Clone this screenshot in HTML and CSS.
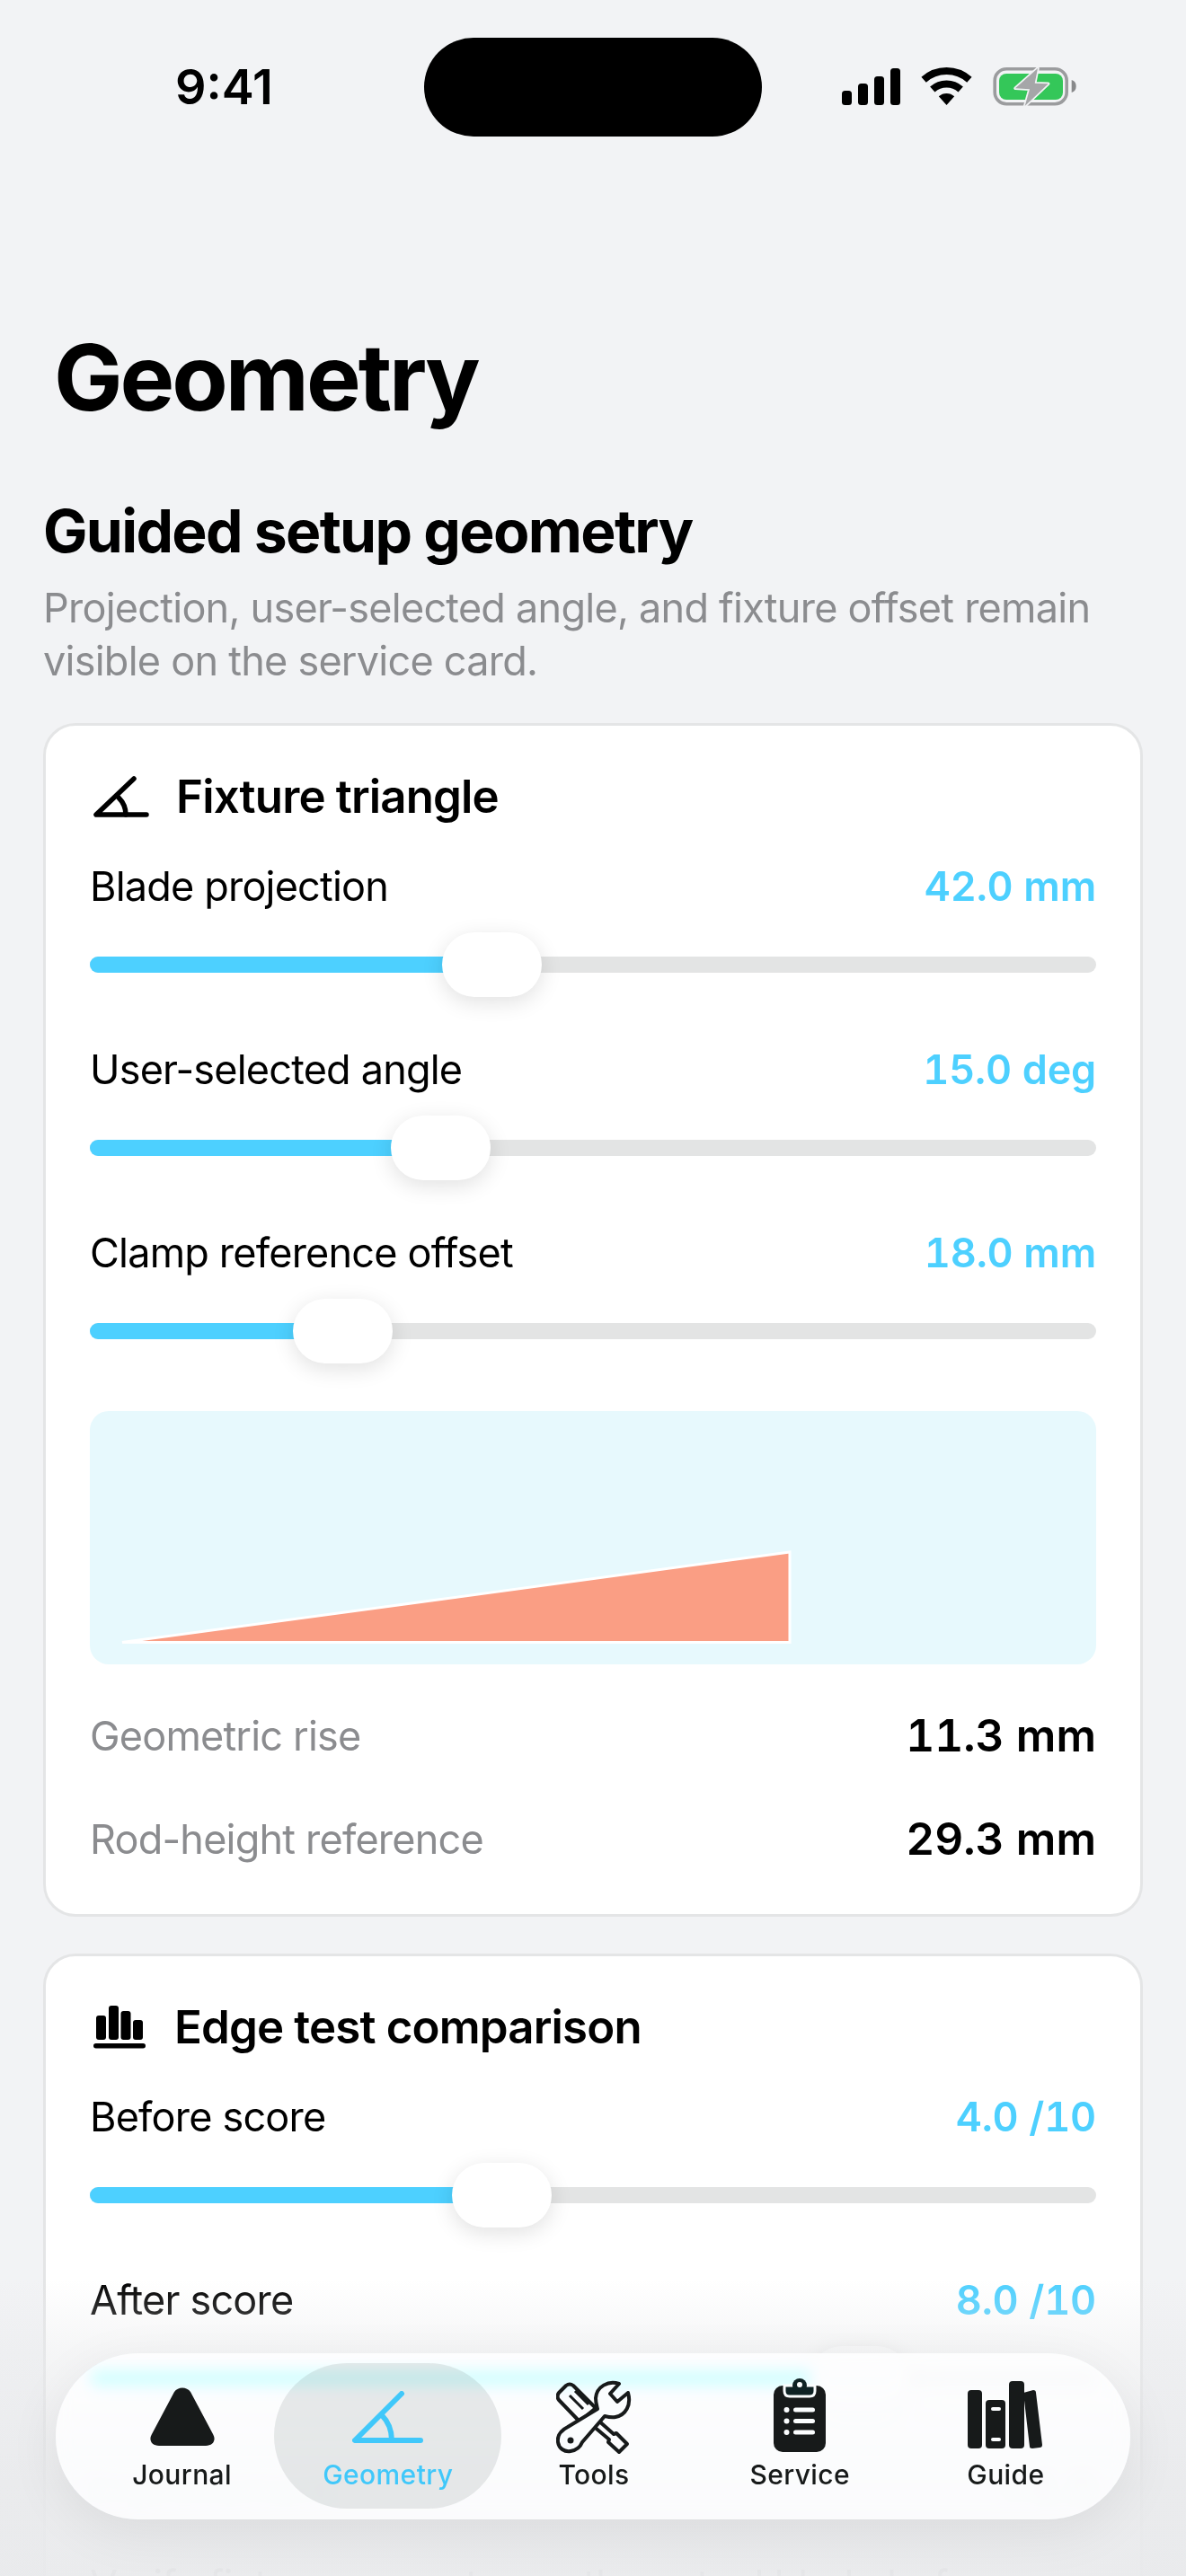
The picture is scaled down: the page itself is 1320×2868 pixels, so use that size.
FILE: index.html
```html
<!DOCTYPE html>
<html lang="en">
<head>
  <meta charset="UTF-8">
  <title>Geometry</title>
  <link rel="stylesheet" href="styles.css">
</head>
<body>
  <div class="phone">
    <header class="status">
      <span class="time">9:41</span>
      <div class="island"></div>
      <div class="status-icons">
        <svg class="signal" width="66" height="41" viewBox="0 0 66 41">
          <rect x="0" y="25" width="11" height="16" rx="3.5"/>
          <rect x="18" y="17" width="11" height="24" rx="3.5"/>
          <rect x="36" y="9" width="11" height="32" rx="3.5"/>
          <rect x="54" y="0" width="11" height="41" rx="3.5"/>
        </svg>
        <svg class="wifi" width="57" height="42" viewBox="0 0 57 42">
          <path d="M3.1 13.8A38 38 0 0 1 53.9 13.8" fill="none" stroke="#000" stroke-width="8"/>
          <path d="M12.8 24.5A23.5 23.5 0 0 1 44.2 24.5" fill="none" stroke="#000" stroke-width="8"/>
          <path d="M28.5 42L19.8 32.3A13 13 0 0 1 37.2 32.3Z"/>
        </svg>
        <svg class="battery" width="93" height="46" viewBox="0 0 93 46">
          <rect x="2.2" y="2.7" width="80" height="39" rx="13" fill="none" stroke="#9b9c9e" stroke-width="3.6"/>
          <rect x="7" y="8" width="71" height="29" rx="8" fill="#34c759"/>
          <path d="M87.7 15C91 16 92.700 18.500 92.700 22S91 28 87.700 29Z" fill="#88898b"/>
          <path d="M50 2L25 24.300L41 25.300L35.700 44L61.700 19.300L46.700 18.700Z" fill="#a5a6a8" stroke="#f2f3f5" stroke-width="3.500" stroke-linejoin="round" paint-order="stroke"/>
        </svg>
      </div>
    </header>

    <main class="content">
      <h1 class="page-title">Geometry</h1>
      <h2 class="section-title">Guided setup geometry</h2>
      <p class="section-sub">Projection, user-selected angle, and fixture offset remain visible on the service card.</p>

      <section class="card">
        <div class="card-head">
          <svg width="62" height="46" viewBox="0 0 62 46" fill="none" stroke="#000" stroke-width="5.500" stroke-linecap="round" stroke-linejoin="round">
            <path d="M45 3L3 43H59"/>
            <path d="M28 24C33 29 36 36 36 43"/>
          </svg>
          <h3>Fixture triangle</h3>
        </div>

        <div class="slider-row">
          <div class="slider-label"><span>Blade projection</span><span class="slider-value">42.0 mm</span></div>
          <div class="slider"><div class="slider-fill" style="width: 40%"></div><div class="slider-thumb" style="left: 35%"></div></div>
        </div>
        <div class="slider-row">
          <div class="slider-label"><span>User-selected angle</span><span class="slider-value">15.0 deg</span></div>
          <div class="slider"><div class="slider-fill" style="width: 35%"></div><div class="slider-thumb" style="left: 29.900%"></div></div>
        </div>
        <div class="slider-row">
          <div class="slider-label"><span>Clamp reference offset</span><span class="slider-value">18.0 mm</span></div>
          <div class="slider"><div class="slider-fill" style="width: 25%"></div><div class="slider-thumb" style="left: 20.200%"></div></div>
        </div>

        <div class="diagram">
          <svg width="1121" height="282" viewBox="0 0 1121 282">
            <path d="M36 257.500L779 157V257.500Z" fill="#fa9e84" stroke="#fff" stroke-width="3"/>
          </svg>
        </div>

        <div class="stats">
          <div class="stat"><span class="stat-label">Geometric rise</span><span class="stat-value">11.3 mm</span></div>
          <div class="stat"><span class="stat-label">Rod-height reference</span><span class="stat-value">29.3 mm</span></div>
        </div>
      </section>

      <section class="card">
        <div class="card-head">
          <svg width="60" height="48" viewBox="0 0 60 48">
            <rect x="3" y="11" width="11" height="27" rx="3"/>
            <rect x="17" y="0" width="11" height="38" rx="3"/>
            <rect x="30.500" y="6" width="11" height="32" rx="3"/>
            <rect x="44" y="16" width="11" height="22" rx="3"/>
            <rect x="0" y="42" width="58" height="5.500" rx="2.750"/>
          </svg>
          <h3>Edge test comparison</h3>
        </div>

        <div class="slider-row">
          <div class="slider-label"><span>Before score</span><span class="slider-value">4.0 /10</span></div>
          <div class="slider"><div class="slider-fill" style="width: 40%"></div><div class="slider-thumb" style="left: 36%"></div></div>
        </div>
        <div class="slider-row">
          <div class="slider-label"><span>After score</span><span class="slider-value">8.0 /10</span></div>
          <div class="slider"><div class="slider-fill" style="width: 76%"></div><div class="slider-thumb" style="left: 71.500%"></div></div>
        </div>

        <div class="stats stats-tight">
          <div class="stat"><span class="stat-label">Improvement</span><span class="stat-value">+4.0</span></div>
        </div>
        <p class="card-note">Verify fixture geometry on the actual blade before logging the result.</p>
      </section>
    </main>

    <div class="bottom-fade"></div>

    <nav class="tabbar">
      <a class="tab">
        <span class="tab-icon icon-journal">
          <svg width="72" height="65" viewBox="0 0 72 65"><path d="M27 5C31 -1 41 -1 45 5L70 52C74 59 70 65 62 65H10C2 65 -2 59 2 52Z" fill="#171a1a"/></svg>
        </span>
        <span class="tab-label">Journal</span>
      </a>
      <a class="tab tab-active">
        <span class="tab-icon icon-geometry">
          <svg width="80" height="60" viewBox="0 0 80 60" fill="none" stroke="#40c8fa" stroke-width="6" stroke-linecap="round" stroke-linejoin="round">
            <path d="M55 3L3 55H76"/>
            <path d="M33 27C40 34 44 44 44 55"/>
          </svg>
        </span>
        <span class="tab-label">Geometry</span>
      </a>
      <a class="tab">
        <span class="tab-icon icon-tools">
          <svg width="84" height="84" viewBox="18 10 84 84" fill="none" stroke="#171a1a" stroke-width="4" stroke-linejoin="round">
            <path d="M21 24L29 16Q33 13 37 16L62 41L44 56L21 32Q18 28 21 24Z"/>
            <path d="M33 27L48 42M39 22L54 37" stroke-width="3"/>
            <path d="M64 54L82 70L85 69L97 81L88 90L76 79L77 76L58 60"/>
            <path d="M88 14C76 10 63 17 62 30C62 35 63 38 64 42L31 62C23 66 19 72 20 79C21 86 27 90 34 89C41 88 45 84 47 79L72 50C76 51 80 52 84 51C95 49 102 38 98 24L86 34L78 25Z" fill="#fbfdfe"/>
            <circle cx="34" cy="77" r="3.500" fill="#171a1a" stroke="none"/>
          </svg>
        </span>
        <span class="tab-label">Tools</span>
      </a>
      <a class="tab">
        <span class="tab-icon icon-service">
          <svg width="58" height="82" viewBox="0 0 58 82">
            <rect x="0" y="8" width="58" height="74" rx="10" fill="#171a1a"/>
            <path d="M12 8H46V14C46 18 44 20 40 20H18C14 20 12 18 12 14Z" fill="#0f2224" stroke="#fbfdfe" stroke-width="3"/>
            <circle cx="29" cy="8" r="8" fill="#0f2224"/>
            <circle cx="29" cy="7" r="3" fill="#fbfdfe"/>
            <g fill="#fbfdfe">
              <circle cx="14.500" cy="35" r="3"/>
              <circle cx="14.500" cy="47.500" r="3"/>
              <circle cx="14.500" cy="60" r="3"/>
              <rect x="22" y="32.500" width="24" height="5" rx="2.500"/>
              <rect x="22" y="45" width="24" height="5" rx="2.500"/>
              <rect x="22" y="57.500" width="24" height="5" rx="2.500"/>
            </g>
          </svg>
        </span>
        <span class="tab-label">Service</span>
      </a>
      <a class="tab">
        <span class="tab-icon icon-guide">
          <svg width="84" height="76" viewBox="0 0 84 76">
            <g fill="#171a1a">
              <rect x="0" y="10" width="16" height="65" rx="4"/>
              <rect x="20" y="21" width="22" height="54" rx="4"/>
              <rect x="46" y="0" width="17" height="75" rx="4"/>
              <path d="M62 13L73 10C75 10 76 11 76 13L83 71C83 73 82 74 80 74L72 75C70 75 69 74 69 73Z"/>
            </g>
            <rect x="26" y="29" width="11" height="4" rx="2" fill="#fbfdfe"/>
            <rect x="26" y="63" width="11" height="4" rx="2" fill="#fbfdfe"/>
          </svg>
        </span>
        <span class="tab-label">Guide</span>
      </a>
    </nav>
  </div>
</body>
</html>
```

FILE: styles.css
```css
* {
  box-sizing: border-box;
}

html,
body {
  margin: 0;
  padding: 0;
}

body {
  font-family: Inter, "Liberation Sans", sans-serif;
  color: #000;
  background: #f2f3f5;
}

.phone {
  position: relative;
  width: 1320px;
  height: 2868px;
  overflow: hidden;
  background: #f2f3f5;
}

/* status bar */
.status {
  height: 152px;
  padding-top: 42px;
  display: flex;
  justify-content: center;
  position: relative;
}

.island {
  width: 376px;
  height: 110px;
  border-radius: 55px;
  background: #000;
}

.time {
  position: absolute;
  left: 195px;
  top: 66px;
  font-size: 54px;
  line-height: 62px;
  font-weight: 600;
}

.status-icons {
  position: absolute;
  left: 937px;
  top: 74px;
  display: flex;
  align-items: flex-start;
}

.signal {
  margin-top: 2px;
}

.wifi {
  margin-left: 22px;
  margin-top: 1px;
}

.battery {
  margin-left: 23px;
}

/* content */
.content {
  padding: 0 48px;
}

.page-title {
  margin: 208px 0 0 12px;
  font-size: 102px;
  line-height: 120px;
  font-weight: 700;
  letter-spacing: -3px;
}

.section-title {
  margin: 71px 0 0;
  font-size: 66px;
  line-height: 80px;
  font-weight: 700;
  letter-spacing: -1.7px;
}

.section-sub {
  margin: 16px 0 0;
  font-size: 45px;
  line-height: 59px;
  letter-spacing: -0.75px;
  color: #8b8c8f;
}

.card {
  margin-top: 40px;
  padding: 49px 49px 0;
  height: 1329px;
  background: #fff;
  border: 3px solid #e4e5e6;
  border-radius: 36px;
}

.card + .card {
  margin-top: 41px;
}

.card-head {
  display: flex;
  align-items: center;
  gap: 30px;
  height: 60px;
  margin-left: 4px;
}

.card-head h3 {
  margin: 0;
  font-size: 51px;
  line-height: 60px;
  font-weight: 600;
  letter-spacing: -0.85px;
}

/* sliders */
.slider-row {
  padding-top: 43px;
}

.slider-row + .slider-row {
  padding-top: 54px;
}

.slider-label {
  display: flex;
  justify-content: space-between;
  align-items: center;
  height: 54px;
  padding-bottom: 2px;
  font-size: 45px;
  letter-spacing: -0.8px;
}

.slider-value {
  color: #4dd0ff;
  font-weight: 600;
  letter-spacing: -0.2px;
  font-variant-numeric: tabular-nums;
}

.slider {
  position: relative;
  height: 18px;
  margin-top: 51px;
  margin-bottom: 27px;
  border-radius: 9px;
  background: #e3e4e4;
}

.slider-fill {
  height: 100%;
  border-radius: 9px;
  background: #4dd0ff;
}

.slider-thumb {
  position: absolute;
  top: -27px;
  width: 111px;
  height: 72px;
  border-radius: 36px;
  background: #fff;
  box-shadow: 0 6px 24px rgba(0, 0, 0, 0.12);
}

/* diagram and stats */
.diagram {
  margin-top: 80px;
  height: 282px;
  border-radius: 21px;
  background: #e7f9fd;
}

.diagram svg {
  display: block;
}

.stats {
  margin-top: 47px;
}

.stat {
  display: flex;
  justify-content: space-between;
  align-items: center;
  height: 64px;
  margin-bottom: 51px;
}

.stat-label {
  font-size: 45px;
  letter-spacing: -0.8px;
  color: #8b8c8f;
}

.stat-value {
  font-size: 49.5px;
  font-weight: 600;
  font-variant-numeric: tabular-nums;
}

.stats-tight {
  margin-top: 82px;
}

.stats-tight .stat {
  margin-bottom: 45px;
}

.stats-tight .stat-value {
  color: #8b8c8f;
}

.card-note {
  margin: 0;
  font-size: 45px;
  line-height: 59px;
  letter-spacing: -0.8px;
  color: #a9aaad;
}

/* fade under the floating bar */
.bottom-fade {
  position: absolute;
  left: 0;
  right: 0;
  bottom: 0;
  height: 330px;
  background: linear-gradient(to bottom, rgba(233, 234, 236, 0), rgba(233, 234, 236, 0.45) 25%, rgba(233, 234, 236, 0.9) 70%, rgba(233, 234, 236, 0.94));
}

/* tab bar */
.tabbar {
  position: absolute;
  left: 62px;
  top: 2620px;
  width: 1196px;
  height: 185px;
  padding: 0 24px 0 26px;
  display: flex;
  border-radius: 92px;
  background: rgba(255, 255, 255, 0.8);
  backdrop-filter: blur(8px) saturate(3.5);
  box-shadow: 0 14px 60px rgba(0, 0, 0, 0.07);
}

.tab {
  position: relative;
  flex: 1;
  display: flex;
  flex-direction: column;
  align-items: center;
}

.tab-active::before {
  content: "";
  position: absolute;
  top: 11px;
  left: -12px;
  right: -12px;
  height: 162px;
  border-radius: 81px;
  background: rgba(120, 130, 130, 0.17);
}

.tab-icon {
  position: relative;
  height: 112px;
  display: flex;
  align-items: flex-end;
  justify-content: center;
}

.icon-journal {
  padding-bottom: 9px;
}

.icon-geometry {
  padding-bottom: 10px;
}

.icon-tools {
  margin-bottom: -2px;
  height: 114px;
}

.icon-service {
  padding-bottom: 2px;
}

.icon-guide {
  padding-bottom: 5px;
}

.tab-label {
  position: relative;
  margin-top: 3px;
  font-size: 30px;
  line-height: 40px;
  font-weight: 500;
  letter-spacing: 0.4px;
  color: #171a1a;
}

.tab-active .tab-label {
  color: #40c8fa;
}
```
